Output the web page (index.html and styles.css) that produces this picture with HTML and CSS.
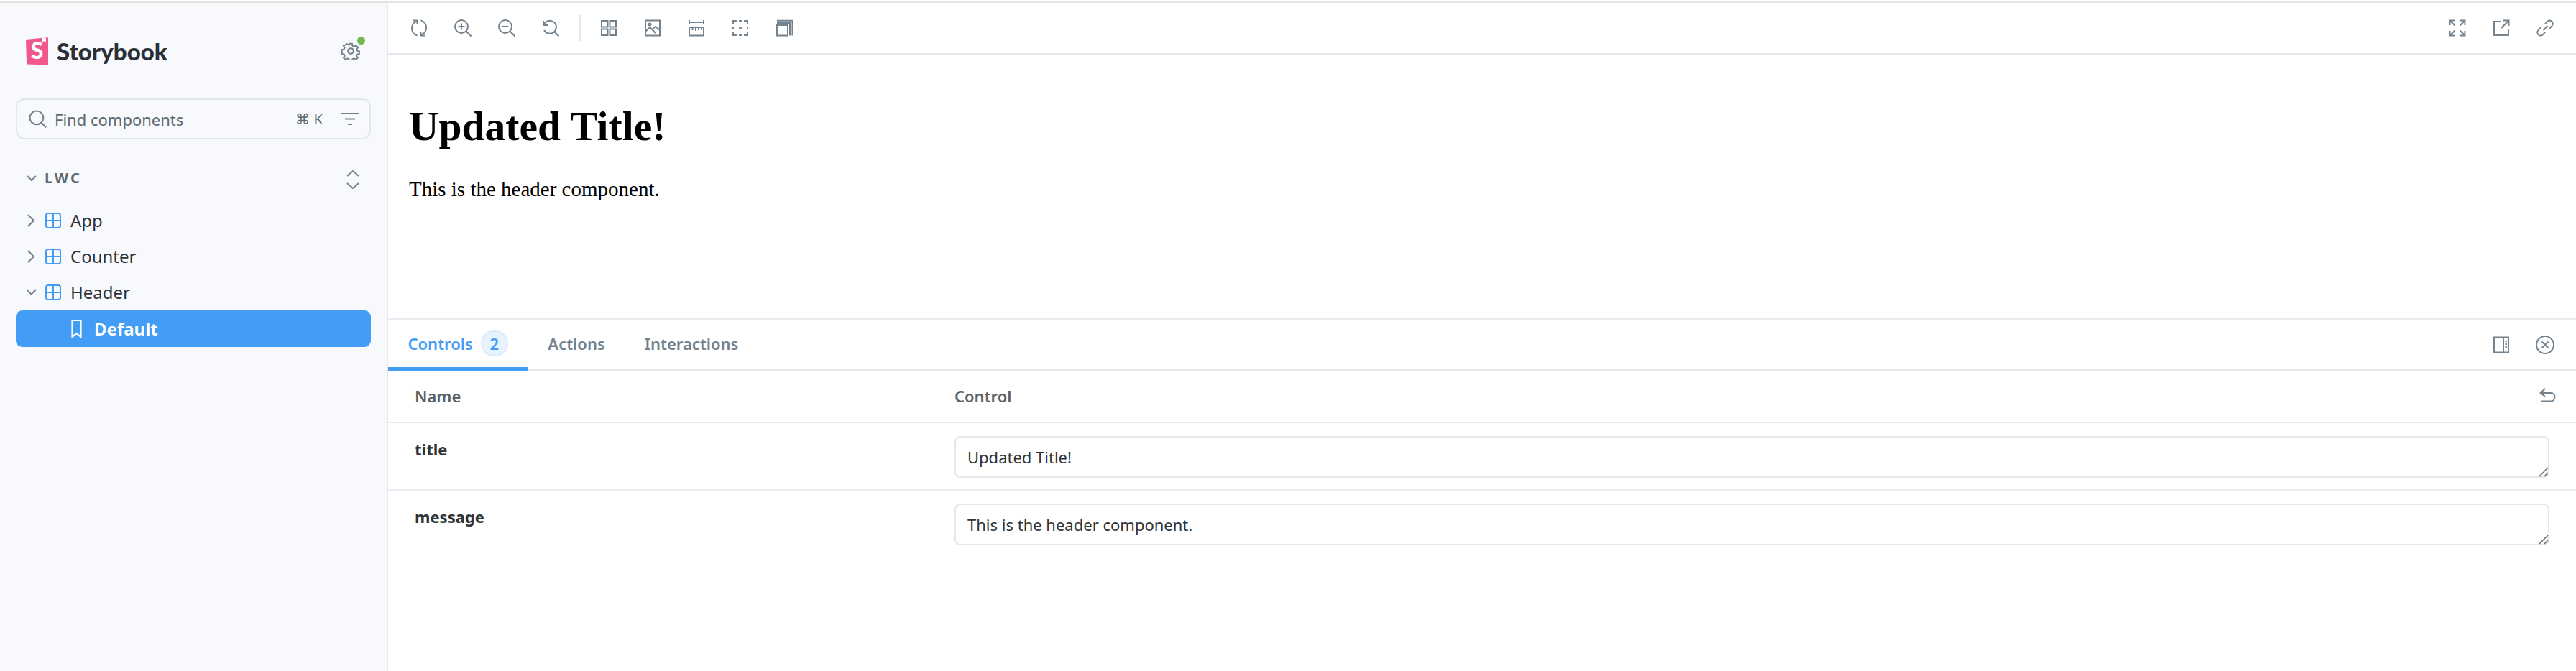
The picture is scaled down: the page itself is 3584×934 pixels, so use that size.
FILE: index.html
```html
<!DOCTYPE html>
<html lang="en">
<head>
    <meta charset="UTF-8" />
    <title>Storybook</title>
    <link rel="stylesheet" href="styles.css">
</head>
<body>
    <div class="topline"></div>
    <div class="app">
        <aside class="sidebar">
            <div class="brand">
                <div class="logo">
                    <svg class="logo-mark" width="33" height="40" viewBox="0 0 33 40">
                        <path d="M1 4 L31 1 Q32 1 32 3 L32 38 Q32 39.500 31 39.500 L3 38.500 Q2 38.500 2 37 Z" fill="#f0588d" />
                        <path d="M24 1.500 L24 8 L26.500 6 L29 8 L29 1.200 Z" fill="#fff" />
                        <text x="16.500" y="31" text-anchor="middle" class="logo-s">S</text>
                    </svg>
                    <span class="logo-text">Storybook</span>
                </div>
                <div class="settings">
                    <svg class="icon" width="26" height="26" viewBox="0 0 24 24">
                        <circle cx="12" cy="12" r="3.500" />
                        <path d="M10 2h4l.6 3 2.500 1.100 2.600-1.600 2.700 2.900-1.700 2.500.9 2.400 3 .7v0l-.2 3.600-3 .6-1 2.400 1.700 2.600-2.800 2.600-2.500-1.700-2.500 1-.6 2.900h-3.600l-.6-3-2.500-1-2.500 1.700-2.800-2.700 1.700-2.500-1-2.500-3-.6V10.600l3-.7 1-2.400-1.700-2.500L6.800 2.300l2.500 1.700z" transform="translate(1.200 .8) scale(.9)" />
                    </svg>
                    <span class="dot"></span>
                </div>
            </div>

            <div class="search">
                <svg class="icon search-icon" width="25" height="25" viewBox="0 0 24 24">
                    <circle cx="10.500" cy="10.500" r="9" />
                    <path d="M17 17l6 6.500" />
                </svg>
                <span class="search-text">Find components</span>
                <span class="shortcut">⌘ K</span>
                <svg class="icon filter-icon" width="24" height="20" viewBox="0 0 24 20">
                    <path d="M0 2h24M5 9.500h14M9 17h6" />
                </svg>
            </div>

            <div class="group-head">
                <svg class="icon group-chevron" width="14" height="10" viewBox="0 0 14 10"><path d="M1 2l6 6 6-6" /></svg>
                <span class="group-name">LWC</span>
                <svg class="icon unfold" width="18" height="28" viewBox="0 0 18 28"><path d="M1 9l8-7 8 7M1 19l8 7 8-7" /></svg>
            </div>

            <ul class="tree">
                <li class="tree-row">
                    <svg class="icon chev" width="14" height="20" viewBox="0 0 14 20"><path d="M1 2l8 8-8 8" /></svg>
                    <svg class="grid-icon" width="22" height="22" viewBox="0 0 22 22"><rect x="1" y="1" width="20" height="20" rx="3" /><path d="M11 1v20M1 11h20" /></svg>
                    <span>App</span>
                </li>
                <li class="tree-row">
                    <svg class="icon chev" width="14" height="20" viewBox="0 0 14 20"><path d="M1 2l8 8-8 8" /></svg>
                    <svg class="grid-icon" width="22" height="22" viewBox="0 0 22 22"><rect x="1" y="1" width="20" height="20" rx="3" /><path d="M11 1v20M1 11h20" /></svg>
                    <span>Counter</span>
                </li>
                <li class="tree-row">
                    <svg class="icon chev" width="14" height="20" viewBox="0 0 14 20"><path d="M-1 6l6.500 6.500L12 6" /></svg>
                    <svg class="grid-icon" width="22" height="22" viewBox="0 0 22 22"><rect x="1" y="1" width="20" height="20" rx="3" /><path d="M11 1v20M1 11h20" /></svg>
                    <span>Header</span>
                </li>
                <li class="tree-row selected">
                    <svg class="bookmark" width="15" height="26" viewBox="0 0 15 26"><path d="M1.500 1h12v23l-6-5-6 5z" /></svg>
                    <span>Default</span>
                </li>
            </ul>
        </aside>

        <main class="main">
            <div class="toolbar">
                <button class="tool"><svg class="icon" width="24" height="24" viewBox="0 0 24 24"><path d="M4 1.500h5.500V7M9 2.500A10.500 10.500 0 0 0 9.500 22.500M20 22.500h-5.500V17M15 21.500A10.500 10.500 0 0 0 14.500 1.500" /></svg></button>
                <button class="tool"><svg class="icon" width="24" height="24" viewBox="0 0 24 24"><circle cx="10" cy="10" r="9" /><path d="M16.500 16.500l7 7M10 5.500v9M5.500 10h9" /></svg></button>
                <button class="tool"><svg class="icon" width="24" height="24" viewBox="0 0 24 24"><circle cx="10" cy="10" r="9" /><path d="M16.500 16.500l7 7M5.500 10h9" /></svg></button>
                <button class="tool"><svg class="icon" width="24" height="24" viewBox="0 0 24 24"><path d="M2 2v6h6M2.500 7.500A9 9 0 1 1 3 15M16.500 16.500l7 7" /></svg></button>
                <span class="sep"></span>
                <button class="tool"><svg class="icon" width="24" height="24" viewBox="0 0 24 24"><rect x="2" y="2" width="8.500" height="8.500" /><rect x="13.500" y="2" width="8.500" height="8.500" /><rect x="2" y="13.500" width="8.500" height="8.500" /><rect x="13.500" y="13.500" width="8.500" height="8.500" /></svg></button>
                <button class="tool"><svg class="icon" width="24" height="24" viewBox="0 0 24 24"><rect x="2" y="1.500" width="20" height="21" /><circle cx="8" cy="7" r="1.500" /><path d="M2 17l6-6 8 8M12 13l4-3 6 5" /></svg></button>
                <button class="tool"><svg class="icon" width="24" height="24" viewBox="0 0 24 24"><path d="M2 1v6M22 1v6M2 4h20" /><rect x="2" y="11" width="20" height="11.500" /><path d="M6.500 11v4M11 11v5M15 11v4M19 11v4" /></svg></button>
                <button class="tool"><svg class="icon" width="24" height="24" viewBox="0 0 24 24"><path d="M7 2H2v5M17 2h5v5M7 22H2v-5M17 22h5v-5M10 2h4M10 22h4M2 10v4M22 10v4" /><circle class="fill-dot" cx="12" cy="12" r="1" /></svg></button>
                <button class="tool"><svg class="icon" width="24" height="24" viewBox="0 0 24 24"><rect x="2" y="8" width="15" height="14.500" /><path d="M2 5h18v17.500M2 1.800h21.500v20.700" /></svg></button>
                <span class="spacer"></span>
                <button class="tool"><svg class="icon" width="24" height="24" viewBox="0 0 24 24"><path d="M2 2l6.500 6.500M22 2l-6.500 6.500M2 22l6.500-6.500M22 22l-6.500-6.500M1.500 8V1.500H8M16 1.500h6.500V8M1.500 16v6.500H8M16 22.500h6.500V16" /></svg></button>
                <button class="tool"><svg class="icon" width="24" height="24" viewBox="0 0 24 24"><path d="M11 3H2v19h20v-9M12 12L22.500 1.500M15 1.500h7.500V9" /></svg></button>
                <button class="tool"><svg class="icon" width="24" height="24" viewBox="0 0 24 24"><path d="M9.500 15.500l6-7M12 6l3-3.500c2-2 5-2 6.800-.2s1.700 4.700 0 6.600L18 13M12 18l-3 3.500c-2 2-5 2-6.800.2S.5 17 2.200 15L6 11" transform="translate(.5 .5) scale(.96)" /></svg></button>
            </div>

            <section class="preview">
                <h1>Updated Title!</h1>
                <p>This is the header component.</p>
            </section>

            <section class="panel">
                <div class="tabs">
                    <div class="tab active">Controls <span class="badge">2</span></div>
                    <div class="tab">Actions</div>
                    <div class="tab">Interactions</div>
                    <span class="spacer"></span>
                    <button class="tool"><svg class="icon" width="24" height="24" viewBox="0 0 24 24"><rect x="2" y="1.500" width="20" height="21" /><path d="M15 1.500v21" /><path class="dots" d="M17.500 7h2.500M17.500 11h2.500M17.500 15h2.500" /></svg></button>
                    <button class="tool"><svg class="icon" width="26" height="26" viewBox="0 0 26 26"><circle cx="13" cy="13" r="12" /><path d="M8.500 8.500l9 9M17.500 8.500l-9 9" /></svg></button>
                </div>

                <div class="row row-head">
                    <div>Name</div>
                    <div>Control</div>
                    <svg class="icon reset" width="23" height="20" viewBox="0 0 23 20"><path d="M8 1L1.500 7 8 12M1.500 7H16c3.500 0 5.500 2.500 5.500 5.500S19.500 18.500 16 18.500H3" /></svg>
                </div>
                <div class="row">
                    <div class="arg-name">title</div>
                    <div class="arg-field">
                        <textarea class="arg-input">Updated Title!</textarea>
                        <svg class="grip" width="14" height="14" viewBox="0 0 14 14"><path d="M1 13L13 1M8 13l5-5" /></svg>
                    </div>
                </div>
                <div class="row row-last">
                    <div class="arg-name">message</div>
                    <div class="arg-field">
                        <textarea class="arg-input">This is the header component.</textarea>
                        <svg class="grip" width="14" height="14" viewBox="0 0 14 14"><path d="M1 13L13 1M8 13l5-5" /></svg>
                    </div>
                </div>
            </section>
        </main>
    </div>
</body>
</html>
```

FILE: styles.css
```css
* {
    box-sizing: border-box;
}
html,
body {
    margin: 0;
    height: 934px;
    overflow: hidden;
    background: #fff;
}
body {
    padding-top: 2px;
    font-family: "Noto Sans", sans-serif;
    color: #2e3438;
}
.topline {
    height: 2px;
    background: #e4e5e2;
}
.app {
    display: flex;
    height: 930px;
}

/* sidebar */
.sidebar {
    width: 540px;
    flex: none;
    padding: 47px 22px 0;
    background: #f7f9fd;
    border-right: 2px solid #e2e8ee;
}
.brand {
    display: flex;
    align-items: center;
    justify-content: space-between;
    height: 40px;
    padding-left: 13px;
    padding-right: 15px;
}
.logo {
    display: flex;
    align-items: center;
    gap: 11px;
}
.logo-mark {
    overflow: visible;
}
.logo-s {
    font-family: "Lato", sans-serif;
    font-weight: 900;
    font-size: 32px;
    fill: #fff;
}
.logo-text {
    font-family: "Lato", sans-serif;
    font-weight: 900;
    font-size: 33px;
    line-height: 40px;
    color: #2a3035;
}
.settings {
    position: relative;
    width: 26px;
    height: 26px;
}
.dot {
    position: absolute;
    top: -7px;
    right: -7px;
    width: 11px;
    height: 11px;
    border-radius: 50%;
    background: #72b94d;
}
.icon {
    fill: none;
    stroke: #73828c;
    stroke-width: 2;
    display: block;
    flex: none;
}
.fill-dot {
    fill: #73828c;
}
.search {
    display: flex;
    align-items: center;
    height: 57px;
    margin-top: 46px;
    padding: 0 15px 0 16px;
    border: 2px solid #dde8f0;
    border-radius: 12px;
}
.search-text {
    margin-left: 11px;
    font-size: 22px;
    color: #5c6870;
}
.shortcut {
    margin-left: auto;
    font-size: 20px;
    color: #5c6870;
}
.filter-icon {
    margin-left: 26px;
}
.group-head {
    display: flex;
    align-items: center;
    height: 28px;
    margin-top: 42px;
    padding: 0 16px 0 15px;
}
.group-chevron {
    margin-bottom: 4px;
}
.group-name {
    margin-left: 11px;
    margin-bottom: 6px;
    font-size: 20px;
    font-weight: 700;
    letter-spacing: 3px;
    color: #5c6870;
}
.unfold {
    margin-left: auto;
}
.tree {
    list-style: none;
    margin: 18px 0 0;
    padding: 0;
}
.tree-row {
    display: flex;
    align-items: center;
    height: 50px;
    padding-left: 16px;
    font-size: 24px;
    color: #2e3438;
}
.tree-row span {
    margin-bottom: 2px;
}
.chev {
    margin-right: 11px;
}
.grid-icon {
    margin-right: 13px;
    fill: none;
    stroke: #439cf5;
    stroke-width: 2;
}
.tree-row.selected {
    height: 51px;
    padding-left: 77px;
    background: #439cf5;
    border-radius: 9px;
    color: #fff;
    font-weight: 700;
}
.tree-row.selected span {
    margin-bottom: 0;
}
.bookmark {
    margin-right: 17px;
    fill: none;
    stroke: #fff;
    stroke-width: 2.200;
}

/* main */
.main {
    flex: 1;
    min-width: 0;
    display: flex;
    flex-direction: column;
}
.toolbar {
    display: flex;
    align-items: center;
    flex: none;
    height: 72px;
    padding: 0 12.500px;
    border-bottom: 2px solid #e2e8ee;
}
.tool {
    display: flex;
    align-items: center;
    justify-content: center;
    width: 61px;
    padding: 0;
    border: 0;
    background: none;
}
.sep {
    width: 2px;
    height: 36px;
    margin: 0 9px;
    background: #e2e8ee;
}
.spacer {
    flex: 1;
}
.preview {
    flex: 1;
    padding: 0 29px;
    font-family: "Liberation Serif", serif;
    color: #000;
}
.preview h1 {
    margin: 67px 0 0;
    font-size: 57.500px;
    line-height: 66px;
    font-weight: 700;
}
.preview p {
    margin: 38px 0 0;
    font-size: 29px;
    line-height: 33px;
}

/* addon panel */
.panel {
    flex: none;
    height: 491px;
    border-top: 2px solid #e6ebef;
}
.tabs {
    display: flex;
    align-items: center;
    height: 71px;
    padding-right: 12.500px;
    border-bottom: 2px solid #e2e8ee;
}
.tab {
    display: flex;
    align-items: center;
    align-self: stretch;
    gap: 11px;
    padding: 0 27.500px;
    margin-bottom: -2px;
    font-size: 22px;
    font-weight: 600;
    color: #73828c;
    border-bottom: 5px solid transparent;
}
.tab.active {
    color: #439cf5;
    border-bottom-color: #439cf5;
    padding-right: 28px;
}
.badge {
    display: flex;
    align-items: center;
    justify-content: center;
    width: 38px;
    height: 36px;
    border-radius: 18px;
    background: #e9f3fd;
    border: 2px solid #dcebfb;
}
.row {
    display: grid;
    grid-template-columns: 751px 1fr;
    position: relative;
    padding: 18px 37px 0 37px;
    height: 94px;
    border-bottom: 2px solid #e8edf1;
}
.row-head {
    height: 73px;
    align-items: center;
    padding-top: 0;
    padding-bottom: 2px;
    font-size: 22px;
    font-weight: 600;
    color: #5b6268;
}
.row-last {
    border-bottom: 0;
}
.reset {
    position: absolute;
    right: 28px;
    top: 24px;
}
.arg-name {
    margin-top: 3px;
    font-size: 22px;
    font-weight: 700;
    color: #2e3438;
}
.arg-field {
    position: relative;
    height: 58px;
}
.arg-input {
    display: block;
    width: 100%;
    height: 58px;
    padding: 12px 16px;
    border: 2px solid #e2e8ee;
    border-radius: 8px;
    font-family: "Noto Sans", sans-serif;
    font-size: 22px;
    color: #2e3438;
    background: #fff;
    outline: none;
    resize: none;
}
.grip {
    position: absolute;
    right: 1px;
    bottom: 1px;
    fill: none;
    stroke: #666;
    stroke-width: 1.500;
}
```
